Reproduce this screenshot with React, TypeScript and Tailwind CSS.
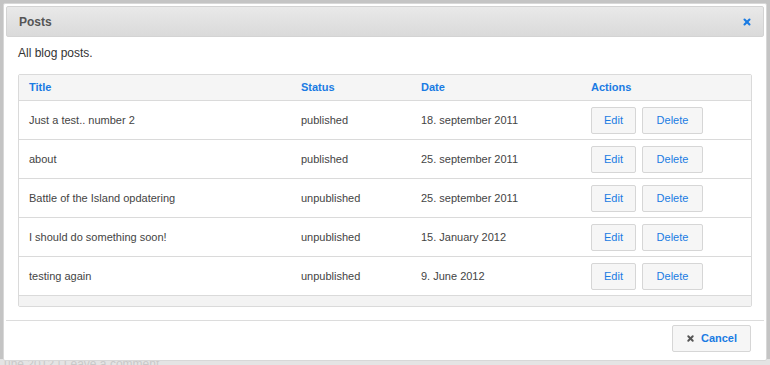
import { X } from "lucide-react";

const posts = [
  { title: "Just a test.. number 2", status: "published", date: "18. september 2011" },
  { title: "about", status: "published", date: "25. september 2011" },
  { title: "Battle of the Island opdatering", status: "unpublished", date: "25. september 2011" },
  { title: "I should do something soon!", status: "unpublished", date: "15. January 2012" },
  { title: "testing again", status: "unpublished", date: "9. June 2012" },
];

const Btn = ({ label, w }: { label: string; w: string }) => (
  <button
    className={`${w} h-[27px] rounded-[2px] border border-[#d6d6d6] bg-[#f6f6f6] text-[11px] text-[#1a7be3]`}
  >
    {label}
  </button>
);

export default function App() {
  return (
    <div
      className="relative h-[365px] w-[770px] overflow-hidden bg-[#c4c4c4]"
      style={{ fontFamily: '"Liberation Sans", Arial, sans-serif' }}
    >
      {/* page behind the overlay */}
      <div className="absolute bottom-0 left-0 h-[6px] w-full bg-[#e4e4e4] text-[12px] leading-[10px] text-[#c9c9c9]">
        <span className="pl-[4px]">une 2012 | </span>
        <span className="underline">Leave a comment</span>
      </div>

      <div className="absolute left-[3px] top-[3px] flex h-[358px] w-[764px] flex-col rounded-[2px] border border-[#d8d8d8] bg-white p-[2px]">
        {/* title bar */}
        <div className="flex h-[31px] shrink-0 items-center justify-between rounded-[2px] border border-[#d3d3d3] bg-gradient-to-b from-[#e9e9e9] to-[#dadada] pl-[12px] pr-[11px]">
          <span className="text-[12px] font-bold text-[#555]">Posts</span>
          <X className="h-[10px] w-[10px] text-[#1a7be3]" strokeWidth={5} />
        </div>

        <div className="px-[12px]">
          <p className="mt-[7px] text-[12px] text-[#333]">All blog posts.</p>

          <div className="mt-[12px] rounded-[2px] border border-[#dadada]">
            <div className="flex h-[26px] items-center border-b border-[#dadada] bg-[#f5f5f5] text-[11px] font-bold text-[#1a7be3]">
              <div className="w-[282px] pl-[10px]">Title</div>
              <div className="w-[120px]">Status</div>
              <div className="w-[170px]">Date</div>
              <div>Actions</div>
            </div>
            {posts.map((p) => (
              <div
                key={p.title}
                className="flex h-[39px] items-center border-b border-[#dadada] text-[11px] text-[#444]"
              >
                <div className="w-[282px] pl-[10px]">{p.title}</div>
                <div className="w-[120px]">{p.status}</div>
                <div className="w-[170px]">{p.date}</div>
                <div className="flex gap-[6px]">
                  <Btn label="Edit" w="w-[45px]" />
                  <Btn label="Delete" w="w-[61px]" />
                </div>
              </div>
            ))}
            <div className="h-[10px] bg-[#f3f3f3]" />
          </div>
        </div>

        <div className="mt-[13px] border-t border-[#dcdcdc]" />
        <div className="flex justify-end pr-[13px] pt-[4px]">
          <button className="flex h-[27px] w-[79px] items-center justify-center gap-[6px] rounded-[2px] border border-[#d6d6d6] bg-[#f6f6f6] text-[11px] font-bold text-[#1a7be3]">
            <X className="h-[9px] w-[9px] text-[#555]" strokeWidth={5} />
            Cancel
          </button>
        </div>
      </div>
    </div>
  );
}
